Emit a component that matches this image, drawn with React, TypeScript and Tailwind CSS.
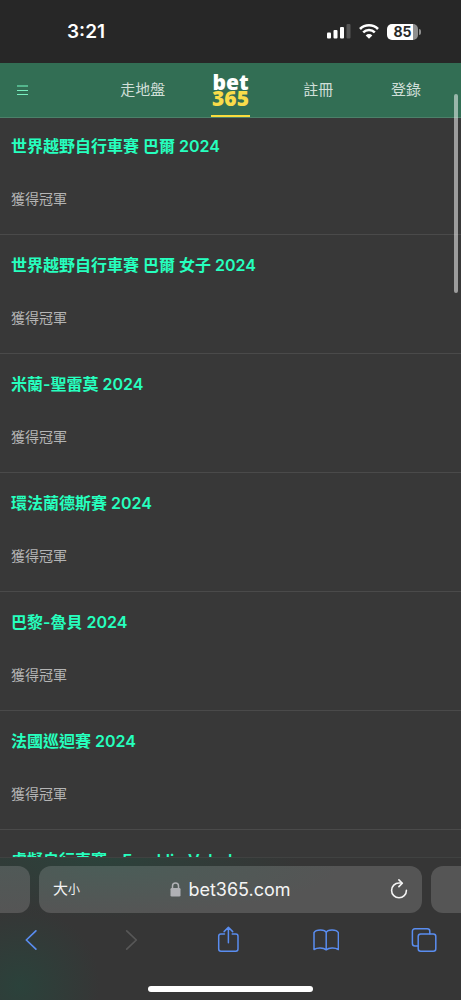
import React from "react";

const races = [
  "世界越野自行車賽 巴爾 2024",
  "世界越野自行車賽 巴爾 女子 2024",
  "米蘭-聖雷莫 2024",
  "環法蘭德斯賽 2024",
  "巴黎-魯貝 2024",
  "法國巡迴賽 2024",
  "虛擬自行車賽 - Franklin Velodrome",
];

function StatusBar() {
  return (
    <div className="flex h-[63px] shrink-0 items-center justify-between bg-[#272727] pr-10 pl-[67px] text-white">
      <time className="text-[19px] leading-6 font-semibold">3:21</time>
      <div className="flex items-center gap-2">
        <svg width="24" height="16" viewBox="0 0 24 16" aria-label="訊號">
          <rect x="0" y="8.5" width="4" height="6" rx="1" fill="#fff" />
          <rect x="6.5" y="6" width="4" height="8.5" rx="1" fill="#fff" />
          <rect x="13" y="3" width="4" height="11.5" rx="1" fill="#fff" />
          <rect x="19.5" y="0" width="4" height="14.5" rx="1" fill="#565656" />
        </svg>
        <svg width="20" height="16" viewBox="0 0 20 16" fill="none" aria-label="Wi-Fi">
          <path d="M1 5a12.8 12.8 0 0 1 18 0" stroke="#fff" strokeWidth="2.6" />
          <path d="M4.2 8.4a8.2 8.2 0 0 1 11.6 0" stroke="#fff" strokeWidth="2.5" />
          <path d="M10 14.7 6.7 11.4a4.6 4.6 0 0 1 6.6 0z" fill="#fff" />
        </svg>
        <div className="flex items-center gap-px">
          <div className="flex h-4 w-[31px] items-center justify-center rounded-[5px] bg-linear-to-r from-white from-85% to-[#8f8f8f] to-85% text-[14px] leading-4 font-bold text-[#272727]">
            85
          </div>
          <div className="h-[6px] w-[2px] rounded-r-full bg-[#8f8f8f]" />
        </div>
      </div>
    </div>
  );
}

function Header() {
  return (
    <header className="h-[55px] shrink-0 border-b border-[#4c8069] bg-[#326e54] px-[11px]">
      <nav className="grid h-full grid-cols-5 text-center text-[15px] leading-[54px] text-[#d0dfd8]">
        <button aria-label="選單" className="flex items-center pl-[6px]">
          <svg width="11" height="11" viewBox="0 0 11 11">
            <path d="M0 0h11v2H0z" fill="#54b68d" />
            <path d="M0 5h11v1H0zM0 9h11v1H0z" fill="#79efc0" />
          </svg>
        </button>
        <a href="#inplay">走地盤</a>
        <a
          href="#home"
          className="flex w-[39px] flex-col items-center justify-self-center border-b-2 border-[#f9dc3d] pt-[11px] font-['Noto_Sans',sans-serif] text-[21px] leading-4 font-black text-white"
        >
          <span>bet</span>
          <span className="text-[#f9dc4a]">365</span>
        </a>
        <a href="#join">註冊</a>
        <a href="#login">登錄</a>
      </nav>
    </header>
  );
}

function RaceList() {
  return (
    <main className="min-h-0 flex-1 overflow-hidden bg-[#383838]">
      <ul>
        {races.map((race) => (
          <li key={race} className="border-b border-[#4a4a4a] px-[11px] pt-[18px] pb-[23px] first:pt-4">
            <h2 className="text-[16px] leading-6 font-semibold whitespace-nowrap text-[#26ffbe]">{race}</h2>
            <a href="#winner" className="mt-[29px] block text-[14px] leading-6 text-[#b4b4b4]">
              獲得冠軍
            </a>
          </li>
        ))}
      </ul>
    </main>
  );
}

const iconProps = {
  width: 26,
  height: 28,
  viewBox: "0 0 26 28",
  fill: "none",
  stroke: "currentColor",
  strokeWidth: 1.7,
  strokeLinecap: "round" as const,
  strokeLinejoin: "round" as const,
};

function BrowserBar() {
  return (
    <footer className="shrink-0 border-t border-[#404241] bg-[#363636] bg-[radial-gradient(80px_80px_at_20px_128px,#2b423b,transparent),radial-gradient(200px_60px_at_100px_0px,#2c423b,transparent)]">
      <div className="flex gap-[9px] pt-2">
        <div className="h-[47px] w-[30px] shrink-0 rounded-r-xl bg-linear-to-b from-[#505957] to-[#555555]" />
        <div className="flex h-[47px] flex-1 items-center justify-between rounded-xl bg-[#555555] bg-[radial-gradient(230px_48px_at_70px_0px,#4b5d58,transparent)] px-[14px] text-[#f4f4f4]">
          <button aria-label="文字大小" className="flex w-[30px] items-baseline leading-6 font-normal">
            <span className="text-[15px]">大</span>
            <span className="text-[12px]">小</span>
          </button>
          <div className="flex items-center gap-[7px] text-[18px] leading-6">
            <svg width="11" height="15" viewBox="0 0 11 15" fill="none" aria-hidden="true">
              <path d="M2.5 7V4a3 3 0 0 1 6 0v3" stroke="#b0b1b5" strokeWidth="1.5" />
              <rect x="0.5" y="6" width="10" height="8.5" rx="1.3" fill="#b0b1b5" />
            </svg>
            <span>bet365.com</span>
          </div>
          <button aria-label="重新載入" className="flex w-[30px] justify-end">
            <svg
              width="18"
              height="22"
              viewBox="0 0 18 22"
              fill="none"
              stroke="currentColor"
              strokeWidth="1.6"
              strokeLinecap="round"
              strokeLinejoin="round"
            >
              <path d="M16.4 11.4A7.4 7.4 0 1 1 9 4h2.6" />
              <path d="m8.9 .9 3.4 3.3-3.4 3.4" />
            </svg>
          </button>
        </div>
        <div className="h-[47px] w-[30px] shrink-0 rounded-l-xl bg-[#555555]" />
      </div>
      <div className="mt-[13px] flex justify-between pr-6 pl-[18px] text-[#5a8df0]">
        <button aria-label="返回">
          <svg {...iconProps}>
            <path d="M17.9 4.8 8.3 14l9.6 9.2" />
          </svg>
        </button>
        <button aria-label="前進" className="text-[#575757]">
          <svg {...iconProps}>
            <path d="M10.7 4.8 20.3 14l-9.6 9.2" />
          </svg>
        </button>
        <button aria-label="分享">
          <svg {...iconProps} strokeWidth={1.5}>
            <path d="M9.5 8H5.9A2.2 2.2 0 0 0 3.7 10.2v12.9A2.2 2.2 0 0 0 5.9 25.3h14.9a2.2 2.2 0 0 0 2.2-2.2V10.2A2.2 2.2 0 0 0 20.8 8h-3.6M13.4 16.7V1.4M9.1 5.6l4.3-4.3 4.3 4.3" />
          </svg>
        </button>
        <button aria-label="書籤">
          <svg {...iconProps} strokeWidth={1.5}>
            <path d="M13.2 6.6C12 3.2 3 3.1 1 6.7v16.8c3.5-2.2 9.4-2 12.2.3 2.8-2.3 8.7-2.5 12.2-.3V6.7C23.4 3.1 14.4 3.2 13.2 6.6zM13.2 6.6v17.2" />
          </svg>
        </button>
        <button aria-label="分頁">
          <svg {...iconProps} strokeWidth={1.5}>
            <rect x="7.2" y="8" width="17.6" height="17.2" rx="2.5" />
            <path d="M7 20H3.9a2.5 2.5 0 0 1-2.5-2.5V5.3a2.5 2.5 0 0 1 2.5-2.5h12.4a2.5 2.5 0 0 1 2.5 2.5v2.5" />
          </svg>
        </button>
      </div>
      <div className="mx-auto mt-8 mb-2 h-[6px] w-[36%] rounded-full bg-white" />
    </footer>
  );
}

export default function App() {
  return (
    <div className="relative flex h-screen flex-col overflow-hidden bg-[#383838] font-['Inter','Noto_Sans_CJK_TC',sans-serif]">
      <StatusBar />
      <Header />
      <RaceList />
      <BrowserBar />
      <div className="absolute top-[94px] right-[3px] h-[199px] w-1 rounded-full bg-white/50" />
    </div>
  );
}
